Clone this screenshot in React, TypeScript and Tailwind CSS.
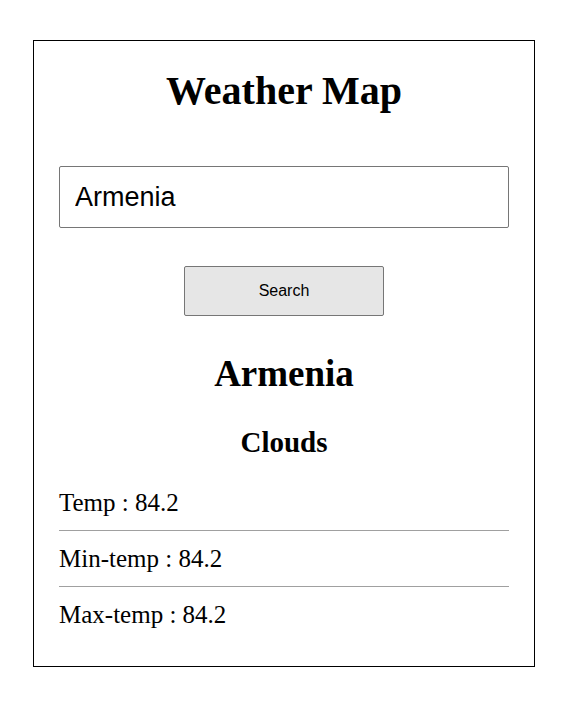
import React, { useState } from 'react';

const serif = { fontFamily: '"Liberation Serif", "Times New Roman", serif' };

export default function App() {
  const [city, setCity] = useState('Armenia');

  const rows = [
    { label: 'Temp', value: 84.2 },
    { label: 'Min-temp', value: 84.2 },
    { label: 'Max-temp', value: 84.2 },
  ];

  return (
    <div className="min-h-screen bg-white pt-[40px] pl-[33px] text-black font-['Liberation_Serif',serif]">
      <div className="w-[502px] border border-black px-[25px] pt-[27px] pb-[37px]">
        <h1 className="text-center text-[40px] leading-[46px] font-bold" style={serif}>
          Weather Map
        </h1>

        {/* Search */}
        <input
          value={city}
          onChange={(e) => setCity(e.target.value)}
          className="mt-[52px] block h-[62px] w-full rounded-[2px] border border-[#767676] pl-[15px] text-[27px] font-['Liberation_Sans',Arial,sans-serif] outline-none"
        />
        <div className="mt-[38px] flex justify-center">
          <button className="h-[50px] w-[200px] rounded-[2px] border border-[#767676] bg-[#e6e6e6] text-[16px] font-['Liberation_Sans',Arial,sans-serif]">
            Search
          </button>
        </div>

        {/* Result */}
        <h2 className="mt-[37px] text-center text-[37px] leading-[42px] font-bold">Armenia</h2>
        <h3 className="mt-[30px] text-center text-[29px] leading-[34px] font-bold">Clouds</h3>

        <div className="mt-[30px]">
          {rows.map((row, i) => (
            <div key={row.label}>
              {i > 0 && <div className="mt-[13px] mb-[14px] border-t border-[#a0a0a0]" />}
              <p className="text-[25px] leading-[28px]">
                {row.label} : {row.value}
              </p>
            </div>
          ))}
        </div>
      </div>
    </div>
  );
}
